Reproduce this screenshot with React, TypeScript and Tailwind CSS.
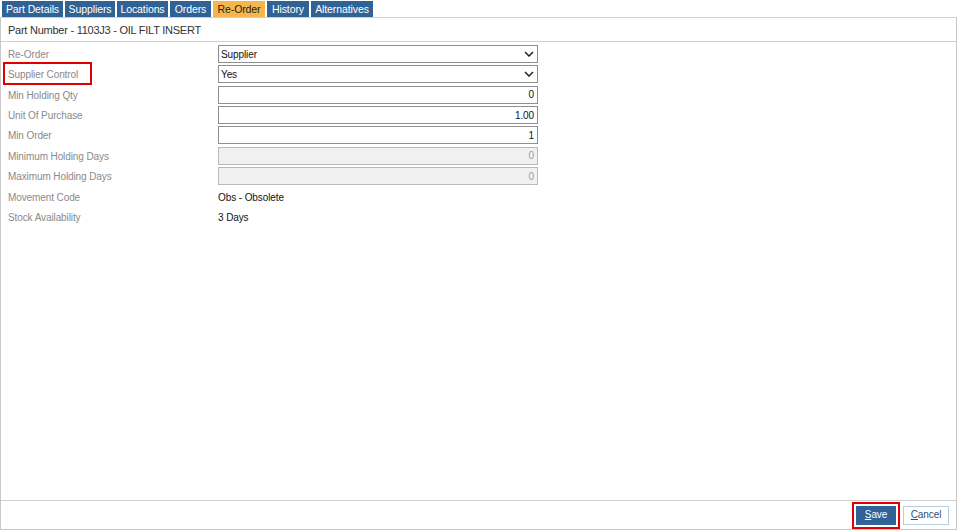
import React from "react";

const tabs: { t: string; w: string }[] = [
  { t: "Part Details", w: "w-[61px]" },
  { t: "Suppliers", w: "w-[50px]" },
  { t: "Locations", w: "w-[51px]" },
  { t: "Orders", w: "w-[41px]" },
  { t: "Re-Order", w: "w-[52px]" },
  { t: "History", w: "w-[42px]" },
  { t: "Alternatives", w: "w-[62px]" },
];

function Chevron() {
  return (
    <svg width="10" height="6" viewBox="0 0 10 6" className="shrink-0">
      <path d="M1 1 L5 5 L9 1" fill="none" stroke="#222" strokeWidth="1.5" />
    </svg>
  );
}

function Label({ children, boxed }: { children: React.ReactNode; boxed?: boolean }) {
  return (
    <div className="w-[210px] shrink-0 relative text-[#8a8a8a] pt-[2px]">
      {boxed && <div className="absolute left-[-5px] top-[-5px] w-[89px] h-[23px] border-2 border-[#e00000]" />}
      {children}
    </div>
  );
}

function SelectBox({ value }: { value: string }) {
  return (
    <div className="w-[320px] h-[18px] border border-[#8f8f8f] bg-white flex items-center justify-between pl-[2px] pr-[3px] text-[#111]">
      <span className="pt-[1px]">{value}</span>
      <Chevron />
    </div>
  );
}

function InputBox({ value, disabled }: { value: string; disabled?: boolean }) {
  return (
    <div
      className={`w-[320px] h-[18px] border flex items-center justify-end pr-[3px] pt-[1px] ${
        disabled ? "bg-[#f0f0f0] border-[#b9b9b9] text-[#a0a0a0]" : "bg-white border-[#8f8f8f] text-[#111]"
      }`}
    >
      {value}
    </div>
  );
}

export default function App() {
  return (
    <div className="w-[961px] h-[532px] bg-white text-[10px] leading-[12px] tracking-[-0.1px]" style={{ fontFamily: "'Liberation Sans', Arial, sans-serif" }}>
      <div className="flex gap-[2px] pl-[2px] pt-[1px] h-[17px]">
        {tabs.map(({ t, w }) => (
          <div
            key={t}
            className={`h-[16px] ${w} text-[10.5px] flex items-center justify-center ${t === "Re-Order" ? "bg-[#f8b54b] text-[#222]" : "bg-[#2f6397] text-white"}`}
          >
            {t}
          </div>
        ))}
      </div>
      <div className="w-[957px] h-[513px] border border-[#c8c8c8] border-t-[#d0d0d0] flex flex-col">
        <div className="h-[24px] border-b border-[#cfcfcf] pl-[7px] flex items-center text-[#333] text-[11px] tracking-[-0.25px]">
          Part Number - 1103J3 - OIL FILT INSERT
        </div>
        <div className="flex-1 pl-[7px] pt-[2px] flex flex-col">
          <div className="flex items-center h-[20px]">
            <Label>Re-Order</Label>
            <SelectBox value="Supplier" />
          </div>
          <div className="flex items-center h-[20px]">
            <Label boxed>Supplier Control</Label>
            <SelectBox value="Yes" />
          </div>
          <div className="flex items-center h-[21px]">
            <Label>Min Holding Qty</Label>
            <InputBox value="0" />
          </div>
          <div className="flex items-center h-[20px]">
            <Label>Unit Of Purchase</Label>
            <InputBox value="1.00" />
          </div>
          <div className="flex items-center h-[20px]">
            <Label>Min Order</Label>
            <InputBox value="1" />
          </div>
          <div className="flex items-center h-[21px]">
            <Label>Minimum Holding Days</Label>
            <InputBox value="0" disabled />
          </div>
          <div className="flex items-center h-[20px]">
            <Label>Maximum Holding Days</Label>
            <InputBox value="0" disabled />
          </div>
          <div className="flex items-center h-[21px]">
            <Label>Movement Code</Label>
            <span className="text-[#111] pt-[2px]">Obs - Obsolete</span>
          </div>
          <div className="flex items-center h-[20px]">
            <Label>Stock Availability</Label>
            <span className="text-[#111] pt-[2px]">3 Days</span>
          </div>
        </div>
        <div className="h-[29px] border-t border-[#cfcfcf] flex items-center justify-end pr-[7px] gap-[3px]">
          <div className="border-2 border-[#e00000] px-[2px] py-[2px]">
            <button className="h-[19px] w-[40px] bg-[#2f6397] text-white flex items-center justify-center">
              <span><u>S</u>ave</span>
            </button>
          </div>
          <button className="h-[19px] w-[46px] border border-[#b8cde0] bg-white text-[#2f4f70] flex items-center justify-center">
            <span><u>C</u>ancel</span>
          </button>
        </div>
      </div>
    </div>
  );
}
